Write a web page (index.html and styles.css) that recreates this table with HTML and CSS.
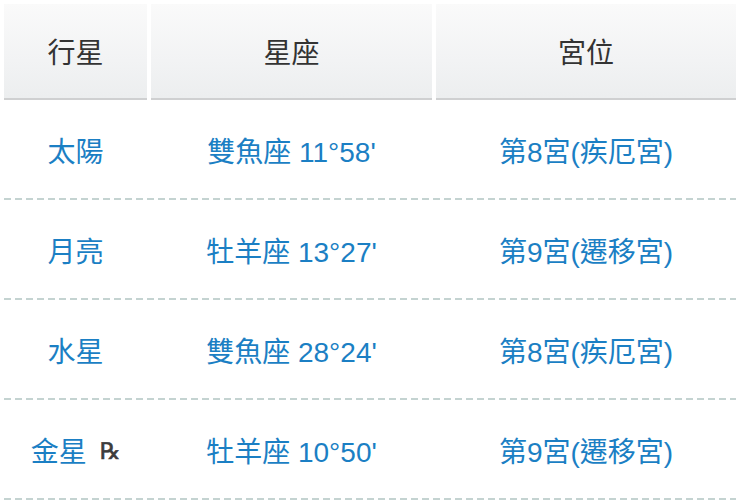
FILE: index.html
```html
<!DOCTYPE html>
<html lang="zh-Hant">
<head>
<meta charset="utf-8">
<title>行星</title>
<link rel="stylesheet" href="styles.css">
</head>
<body>
<div class="table">
  <div class="head">
    <div class="hcell">行星</div>
    <div class="hcell">星座</div>
    <div class="hcell">宮位</div>
  </div>
  <div class="row">
    <div class="cell">太陽</div>
    <div class="cell">雙魚座 11°58'</div>
    <div class="cell">第8宮(疾厄宮)</div>
  </div>
  <div class="row">
    <div class="cell">月亮</div>
    <div class="cell">牡羊座 13°27'</div>
    <div class="cell">第9宮(遷移宮)</div>
  </div>
  <div class="row">
    <div class="cell">水星</div>
    <div class="cell">雙魚座 28°24'</div>
    <div class="cell">第8宮(疾厄宮)</div>
  </div>
  <div class="row">
    <div class="cell">金星<span class="retro">℞</span></div>
    <div class="cell">牡羊座 10°50'</div>
    <div class="cell">第9宮(遷移宮)</div>
  </div>
</div>
</body>
</html>
```
FILE: styles.css
```css
html, body {
  margin: 0;
  padding: 0;
  background: #ffffff;
}
body {
  font-family: "Liberation Sans", "Noto Sans CJK TC", sans-serif;
  font-size: 28px;
}
.table {
  padding: 4px 4px 0 4px;
}
.head, .row {
  display: grid;
  grid-template-columns: 143px 281px 300px;
  column-gap: 4px;
}
.hcell {
  height: 94px;
  border-bottom: 2px solid #cfd0d1;
  background: linear-gradient(to bottom, #fafafa 0%, #f2f3f4 60%, #eceeef 100%);
  color: #333333;
  display: flex;
  align-items: center;
  justify-content: center;
}
.row {
  height: 100px;
  background: repeating-linear-gradient(90deg, #c4d3d1 0 7px, transparent 7px 11px) left bottom / 100% 2px no-repeat;
}
.cell {
  color: #1b7fc4;
  display: flex;
  align-items: center;
  justify-content: center;
  padding-bottom: 1px;
}
.retro {
  color: #3c3c3c;
  font-size: 23px;
  margin-left: 13px;
  margin-top: 3px;
  font-family: "DejaVu Sans", sans-serif;
  -webkit-text-stroke: 0.6px #3c3c3c;
}
```
